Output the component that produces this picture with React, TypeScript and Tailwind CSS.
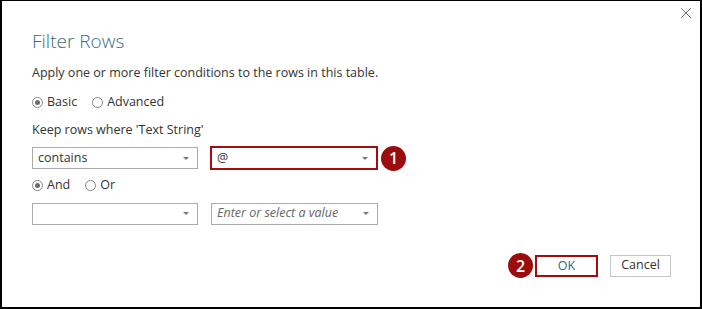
import { X } from "lucide-react";

const font = { fontFamily: "'Open Sans', 'Noto Sans', sans-serif" };

function Radio({ checked, label }: { checked?: boolean; label: string }) {
  return (
    <label className="flex items-center gap-[4px]">
      <span className="flex size-[11px] items-center justify-center rounded-full border border-[#8a8a8a] bg-white">
        {checked && <span className="size-[5px] rounded-full bg-[#6d6d6d]" />}
      </span>
      <span className="text-[12.5px] text-[#333]">{label}</span>
    </label>
  );
}

function Select({
  value,
  placeholder,
  highlight,
  className = "",
}: {
  value?: string;
  placeholder?: string;
  highlight?: boolean;
  className?: string;
}) {
  return (
    <div
      className={`flex h-[22px] items-center justify-between bg-white pl-[5px] pr-[8px] ${
        highlight ? "border-2 border-[#a30c0c]" : "border border-[#ababab]"
      } ${className}`}
    >
      {value ? (
        <span className="text-[12.5px] text-[#333]">{value}</span>
      ) : (
        <span className="text-[12.5px] italic text-[#666]">{placeholder}</span>
      )}
      <span className="h-0 w-0 border-x-[3px] border-t-[3px] border-x-transparent border-t-[#7a7a7a]" />
    </div>
  );
}

function Badge({ n }: { n: number }) {
  return (
    <span className="flex size-[25px] items-center justify-center rounded-full bg-[#9b0c0c] text-[16px] font-semibold text-white">
      {n}
    </span>
  );
}

export default function App() {
  return (
    <div
      style={font}
      className="relative h-[309px] w-[702px] border-b-2 border-l-2 border-r-2 border-t border-black bg-white"
    >
      <button type="button" className="absolute right-[5px] top-[3px] text-[#555]">
        <X className="size-[18px]" strokeWidth={1.1} />
      </button>

      <div className="flex flex-col pl-[30px] pt-[28px]">
        <h1 className="text-[19px] font-light leading-[24px] text-[#3e6a7a]">Filter Rows</h1>
        <p className="mt-[11px] text-[12.5px] leading-[18px] text-[#333]">
          Apply one or more filter conditions to the rows in this table.
        </p>

        <div className="mt-[11px] flex items-center gap-[15px]">
          <Radio checked label="Basic" />
          <Radio label="Advanced" />
        </div>

        <p className="mt-[9px] text-[12.5px] leading-[18px] text-[#333]">Keep rows where 'Text String'</p>

        <div className="mt-[7px] flex items-center">
          <Select value="contains" className="w-[166px]" />
          <Select value="@" highlight className="ml-[12px] h-[24px] w-[168px]" />
          <span className="ml-[3px]">
            <Badge n={1} />
          </span>
        </div>

        <div className="mt-[5px] flex items-center gap-[15px]">
          <Radio checked label="And" />
          <Radio label="Or" />
        </div>

        <div className="mt-[8px] flex items-center">
          <Select className="w-[166px]" />
          <Select placeholder="Enter or select a value" className="ml-[13px] w-[167px]" />
        </div>
      </div>

      <div className="absolute bottom-[29px] right-[29px] flex items-center">
        <Badge n={2} />
        <button
          type="button"
          className="ml-[2px] h-[22px] w-[63px] border-2 border-[#a30c0c] text-[12.5px] text-[#2b6b80]"
        >
          OK
        </button>
        <button
          type="button"
          className="ml-[12px] h-[22px] w-[61px] border border-[#c6c6c6] text-[12.5px] text-[#333]"
        >
          Cancel
        </button>
      </div>
    </div>
  );
}
